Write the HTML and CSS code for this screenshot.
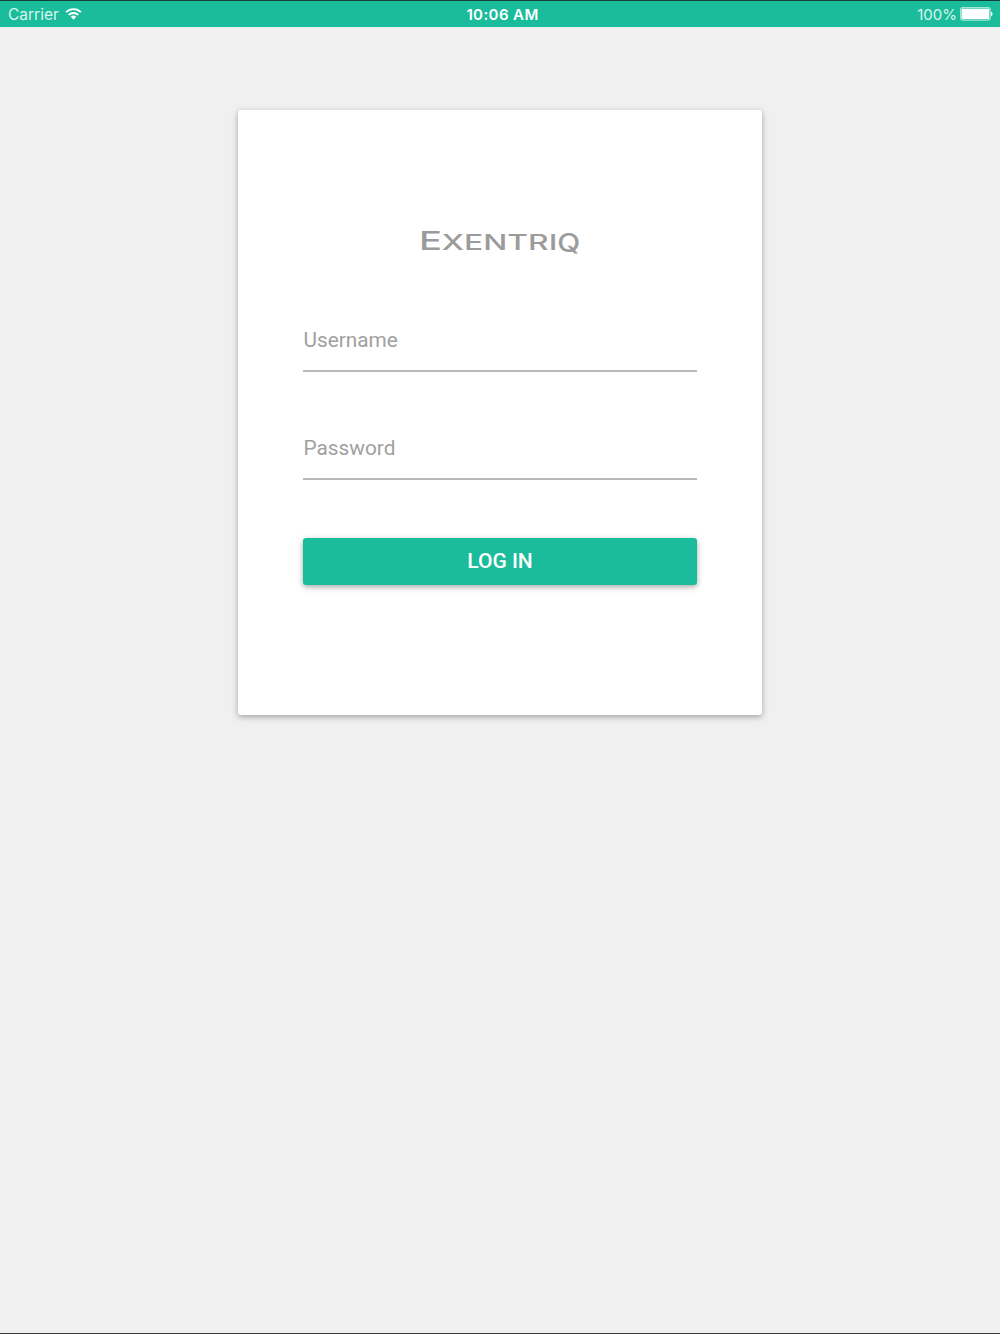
FILE: index.html
```
<!DOCTYPE html>
<html lang="en">
<head>
  <meta charset="UTF-8" />
  <meta name="viewport" content="width=device-width, initial-scale=1.0" />
  <title>Exentriq</title>
  <link rel="stylesheet" href="styles.css">
</head>
<body>
  <header class="status-bar">
    <div class="carrier">
      <span class="carrier-name">Carrier</span>
      <svg class="wifi" width="17" height="14" viewBox="0 0 18 14">
        <g fill="none" stroke="#fff" stroke-width="2">
          <path d="M1.2 5.1a11 11 0 0 1 15.6 0" />
          <path d="M4 8a7 7 0 0 1 10 0" />
        </g>
        <path d="M9 13 6.1 10a4.1 4.1 0 0 1 5.8 0z" fill="#fff" />
      </svg>
    </div>
    <div class="clock">10:06 AM</div>
    <div class="battery">
      <span class="battery-level">100%</span>
      <svg width="33" height="14" viewBox="0 0 33 14">
        <rect x="0.6" y="0.6" width="29.6" height="12.6" rx="2.4" fill="none" stroke="#a6e6d9" stroke-width="1.2" />
        <rect x="1.6" y="1.7" width="27.6" height="10.4" rx="1" fill="#fff" />
        <path d="M31 4.7c2 .6 2 4 0 4.600z" fill="#fff" />
      </svg>
    </div>
  </header>
  <main class="page">
    <form class="card">
      <svg class="logo" width="162" height="44" viewBox="0 0 162 44">
        <text class="logo-big" x="0" y="30.200" textLength="23" lengthAdjust="spacingAndGlyphs">E</text>
        <text class="logo-small" x="22.800" y="30.200" textLength="115.500" lengthAdjust="spacingAndGlyphs">XENTRI</text>
        <text class="logo-q" x="138.300" y="31.800" textLength="23" lengthAdjust="spacingAndGlyphs">Q</text>
      </svg>
      <input class="field" type="text" placeholder="Username" />
      <input class="field" type="password" placeholder="Password" />
      <button class="login-button" type="button">LOG IN</button>
    </form>
  </main>
</body>
</html>
```
FILE: styles.css
```
* {
  box-sizing: border-box;
}
html, body {
  margin: 0;
  padding: 0;
  height: 100%;
}
body {
  display: flex;
  flex-direction: column;
  font-family: Roboto, "Liberation Sans", sans-serif;
  background: #f0f0f0;
  border-bottom: 1px solid #38373b;
}
.status-bar {
  display: grid;
  grid-template-columns: 1fr auto 1fr;
  align-items: center;
  height: 27px;
  padding: 0 7px 0 8px;
  background: #1bbc9b;
  border-top: 1px solid #123f3a;
  color: #fff;
  font-family: Inter, sans-serif;
  font-size: 15.5px;
}
.carrier, .battery {
  display: flex;
  align-items: center;
}
.carrier {
  gap: 6px;
}
.carrier-name, .battery-level {
  color: #d9f5ef;
}
.battery-level {
  font-size: 15px;
}
.clock {
  padding-left: 4px;
  font-size: 15px;
  font-weight: 600;
  letter-spacing: 0.4px;
}
.battery {
  justify-content: flex-end;
  gap: 3px;
}
.page {
  flex: 1;
  padding-top: 83px;
}
.card {
  display: flex;
  flex-direction: column;
  width: 524px;
  height: 605px;
  margin: 0 auto;
  padding: 110px 65px 0;
  background: #fff;
  border-radius: 3px;
  box-shadow: 0 2px 5px rgba(0,0,0,0.24), 0 2px 10px rgba(0,0,0,0.1);
}
.logo {
  align-self: center;
  margin-bottom: 52px;
}
.logo-big, .logo-small, .logo-q {
  fill: #9b9b9b;
  font-family: Inter, sans-serif;
  font-weight: 500;
}
.logo-big {
  font-size: 26px;
}
.logo-small {
  font-size: 22px;
}
.logo-q {
  font-size: 25px;
}
.field {
  height: 56px;
  margin: 0 0 52px;
  padding: 0 0 6px 0.5px;
  border: none;
  border-bottom: 2px solid #bababa;
  border-radius: 0;
  outline: none;
  background: none;
  color: #333;
  font-family: inherit;
  font-size: 20.800px;
}
.field::placeholder {
  color: #a0a0a0;
}
.login-button {
  height: 47px;
  margin-top: 6px;
  padding: 0 0 2px;
  border: none;
  border-radius: 3px;
  background: #1bbc9b;
  box-shadow: 0 2px 5px rgba(0,0,0,0.26), 0 2px 10px rgba(0,0,0,0.1);
  color: #fff;
  font-family: inherit;
  font-size: 21px;
  font-weight: 500;
  cursor: pointer;
}
```
